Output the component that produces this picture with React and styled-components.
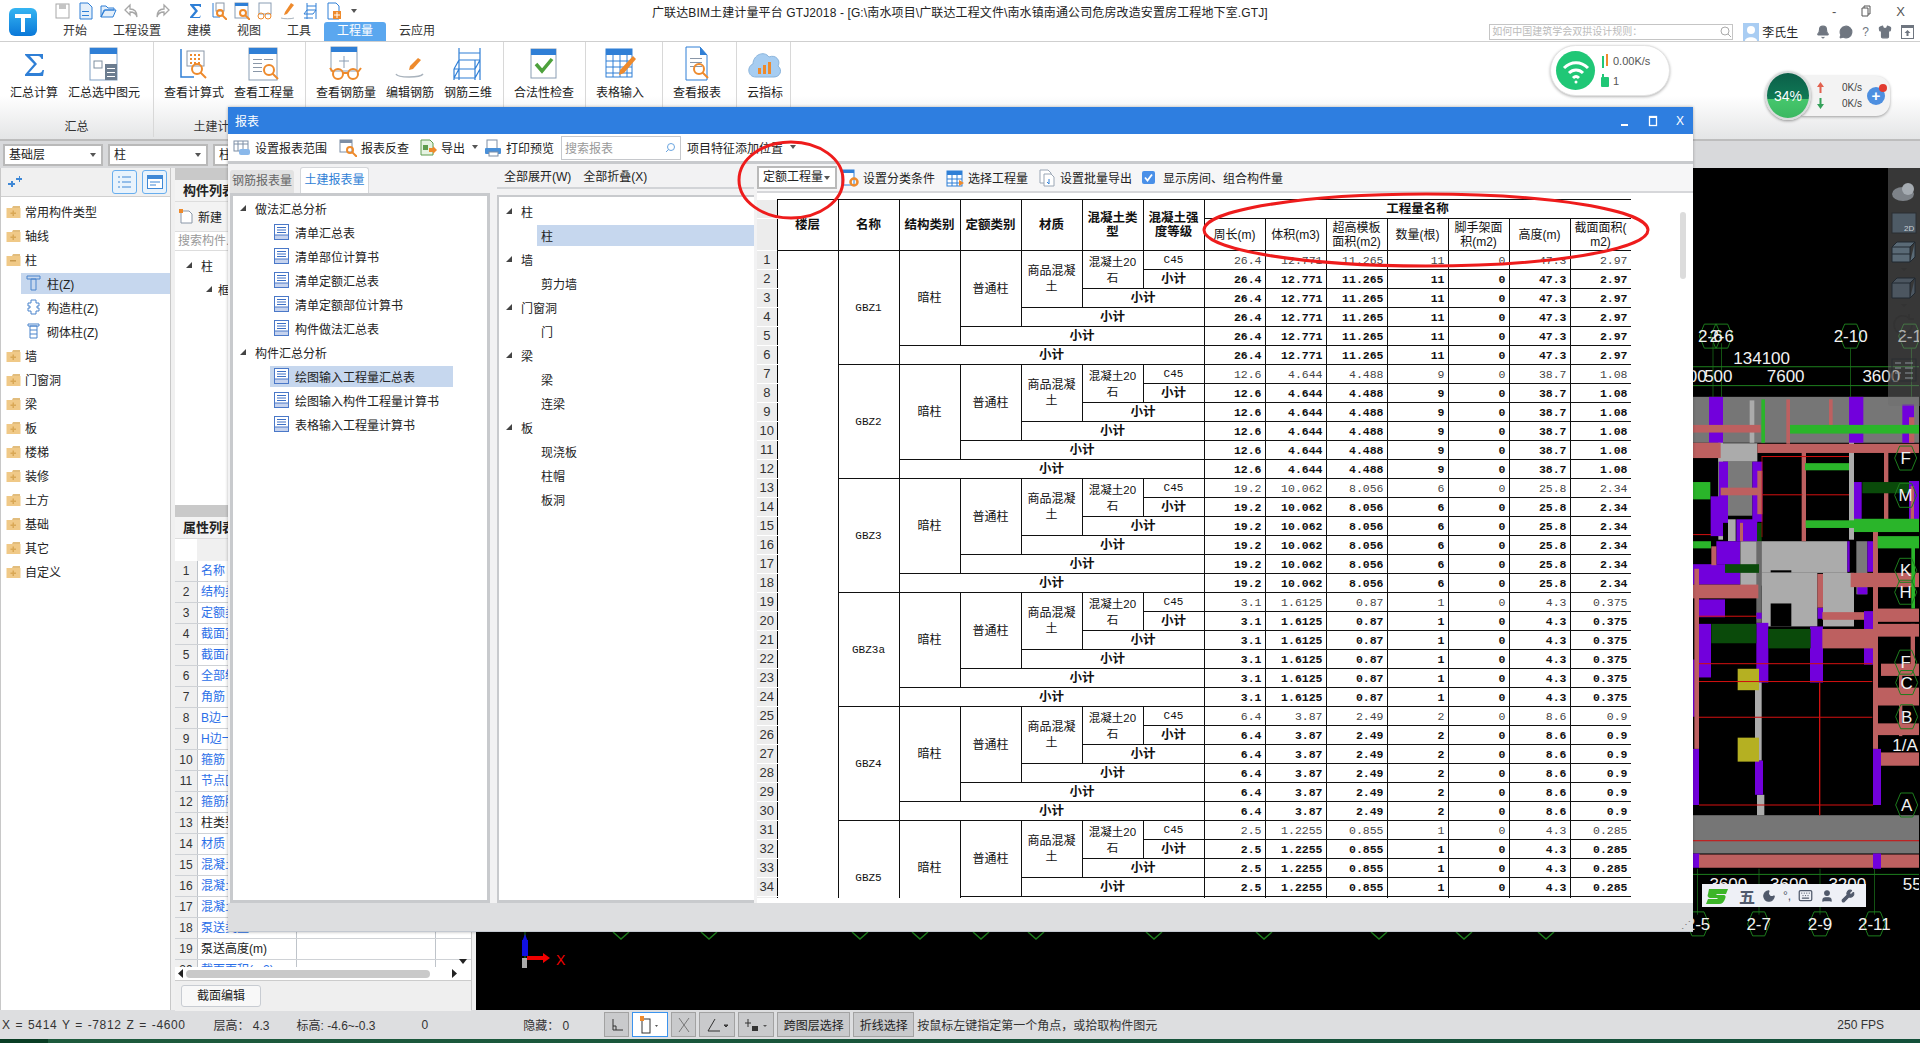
import React from 'react';
import styled, { createGlobalStyle } from 'styled-components';
import { Moon, Keyboard, User, Wrench, Bell, MessageCircle, Shirt } from 'lucide-react';

const SANS = '"Liberation Sans", "Noto Sans CJK SC", sans-serif';

const GlobalStyle = createGlobalStyle`
  html, body { margin: 0; padding: 0; background: #000; }
  * { box-sizing: border-box; }
  body { font-family: ${SANS}; font-size: 12px; color: #222; }
`;

const BLUE = '#2f7fd6';
const ORANGE = '#ee8a2c';

const Page = styled.div`
  position: relative;
  width: 1920px;
  height: 1043px;
  overflow: hidden;
  display: flex;
  flex-direction: column;
  background: #dddee0;
`;

/* ---------- top bar ---------- */
const Header = styled.header`
  height: 42px;
  display: flex;
  background: #fff;
  border-bottom: 1px solid #cfcfcf;
`;
const LogoBox = styled.div`
  width: 46px;
  padding: 8px 0 0 8px;
`;
const HeaderMain = styled.div`
  flex: 1;
  display: flex;
  flex-direction: column;
`;
const QuickRow = styled.div`
  height: 22px;
  display: flex;
  align-items: center;
`;
const QuickIcons = styled.div`
  width: 606px;
  display: flex;
  align-items: center;
  gap: 6px;
  padding-left: 8px;
`;
const QuickSlot = styled.span`
  display: flex;
  margin-right: ${(p) => p.$gap || 0}px;
`;
const TitleText = styled.div`
  white-space: nowrap;
  letter-spacing: 0.12px;
  color: #222;
`;
const WindowButtons = styled.div`
  margin-left: auto;
  display: flex;
  gap: 25px;
  padding-right: 15px;
  color: #555;
  font-size: 13px;
  align-items: center;
`;
const TabRow = styled.nav`
  height: 19px;
  display: flex;
  align-items: center;
  padding-left: 4px;
`;
const Tab = styled.div`
  height: 19px;
  line-height: 19px;
  padding: 0 13px;
  font-size: 12px;
  color: ${(p) => (p.$active ? '#fff' : '#333')};
  background: ${(p) => (p.$active ? '#5aa7ef' : 'transparent')};
  border-radius: ${(p) => (p.$active ? '3px 3px 0 0' : '0')};
`;
const UserArea = styled.div`
  margin-left: auto;
  display: flex;
  align-items: center;
  height: 19px;
  padding-right: 6px;
`;
const HelpSearch = styled.div`
  width: 244px;
  height: 16px;
  border: 1px solid #c5c5c5;
  margin-right: 10px;
  color: #bbb;
  font-size: 10px;
  line-height: 14px;
  padding-left: 2px;
  overflow: hidden;
  white-space: nowrap;
  display: flex;
  justify-content: space-between;
  align-items: center;
`;
const UserName = styled.span`
  font-size: 12px;
  margin: 0 18px 0 3px;
  color: #222;
`;
const UserIcons = styled.div`
  display: flex;
  align-items: center;
  gap: 9px;
  color: #6f7680;
`;

/* ---------- ribbon ---------- */
const Ribbon = styled.div`
  height: 97px;
  display: flex;
  background: linear-gradient(#fff 0%, #fff 55%, #e4e5e6 100%);
`;
const RibbonGroup = styled.section`
  width: ${(p) => p.$w}px;
  height: 95px;
  flex: none;
  display: flex;
  flex-direction: column;
  border-right: 1px solid #d8d8d8;
`;
const RibbonButtons = styled.div`
  flex: 1;
  display: flex;
  gap: 10px;
  padding: 4px 10px 0;
`;
const RibbonButton = styled.div`
  display: flex;
  flex-direction: column;
  align-items: center;
  white-space: nowrap;
  font-size: 12px;
  color: #222;
`;
const RibbonIcon = styled.div`
  height: 36px;
  display: flex;
  align-items: center;
  margin-bottom: 1px;
`;
const GroupLabel = styled.div`
  text-align: center;
  height: 20px;
  line-height: 20px;
  color: #333;
`;
const NetPill = styled.div`
  position: absolute;
  left: 1550px;
  top: 45px;
  width: 120px;
  height: 51px;
  display: flex;
  align-items: center;
  gap: 6px;
  padding-left: 5px;
  background: #fff;
  border: 1px solid #e3e3e3;
  border-radius: 26px;
  box-shadow: 0 1px 3px rgba(0, 0, 0, 0.3);
`;
const WifiDot = styled.div`
  width: 39px;
  height: 39px;
  flex: none;
  display: flex;
  align-items: center;
  justify-content: center;
  border-radius: 50%;
  background: #20c776;
`;
const NetStats = styled.div`
  display: flex;
  flex-direction: column;
  gap: 6px;
  font-size: 11px;
  color: #555;
`;
const NetLine = styled.div`
  display: flex;
  align-items: center;
  gap: 4px;
`;
const SpeedWidget = styled.div`
  position: absolute;
  left: 1765px;
  top: 71px;
  height: 49px;
  display: flex;
  align-items: center;
`;
const SpeedSphere = styled.div`
  position: relative;
  z-index: 1;
  width: 46px;
  height: 49px;
  display: flex;
  align-items: center;
  justify-content: center;
  border-radius: 50%;
  border: 2px solid #d9dcdc;
  background: linear-gradient(#0c5f49 0%, #0f7a55 58%, #46c66c 58%, #3ab861 100%);
  color: #fff;
  font-size: 14px;
  box-shadow: 0 1px 3px rgba(0, 0, 0, 0.4);
`;
const SpeedPill = styled.div`
  position: relative;
  width: 88px;
  height: 40px;
  margin-left: -9px;
  padding: 0 5px 0 15px;
  display: flex;
  align-items: center;
  justify-content: space-between;
  background: #f3f3f3;
  border-radius: 0 14px 14px 0;
  box-shadow: 0 1px 3px rgba(0, 0, 0, 0.35);
  font-size: 10px;
  color: #444;
`;
const SpeedRows = styled.div`
  display: flex;
  flex-direction: column;
  gap: 5px;
`;
const SpeedRow = styled.div`
  display: flex;
  align-items: center;
  gap: 18px;
`;
const PlusBadge = styled.div`
  position: relative;
  width: 18px;
  height: 18px;
  line-height: 17px;
  text-align: center;
  border-radius: 50%;
  background: #4d8fe0;
  color: #fff;
  font-size: 15px;
  font-weight: bold;
  &::after {
    content: '';
    position: absolute;
    right: -2px;
    top: -3px;
    width: 8px;
    height: 8px;
    border-radius: 50%;
    background: #e23b30;
  }
`;

/* ---------- workspace ---------- */
const ComboBar = styled.div`
  height: 29px;
  display: flex;
  align-items: center;
  gap: 5px;
  padding-left: 3px;
  background: #d8d9db;
  border-top: 2px solid #bdbdbd;
`;
const Combo = styled.div`
  position: relative;
  width: ${(p) => p.$w}px;
  height: ${(p) => p.$h || 22}px;
  line-height: ${(p) => (p.$h || 22) - 4}px;
  padding-left: 4px;
  background: #fff;
  border: 2px solid #b9b9b9;
  color: #222;
  font-size: 12px;
  &::after {
    content: '';
    position: absolute;
    right: 5px;
    top: 50%;
    margin-top: -2px;
    border: 3px solid transparent;
    border-top: 4px solid #555;
  }
`;
const Workspace = styled.div`
  flex: 1;
  display: flex;
  min-height: 0;
  background: #f0f0f0;
`;
const TreePanel = styled.aside`
  width: 171px;
  display: flex;
  flex-direction: column;
  background: #fff;
  border-right: 1px solid #c8c8c8;
  border-left: 1px solid #c8c8c8;
`;
const TreeHead = styled.div`
  height: 29px;
  flex: none;
  display: flex;
  align-items: center;
  padding: 0 3px 0 7px;
  gap: 5px;
  background: #f0f0f0;
  border-bottom: 1px solid #d0d0d0;
`;
const ModeButton = styled.div`
  width: 25px;
  height: 24px;
  display: flex;
  align-items: center;
  justify-content: center;
  background: #e9f3fc;
  border: 1px solid #68aeee;
  border-radius: 3px;
  margin-left: ${(p) => (p.$first ? 'auto' : '0')};
`;
const Tree = styled.div`
  padding-top: ${(p) => p.$top || 0}px;
`;
const TreeRow = styled.div`
  height: 24px;
  display: flex;
  align-items: center;
  padding-left: ${(p) => p.$indent}px;
  color: #222;
  font-size: 12px;
  white-space: nowrap;
`;
const RowLabel = styled.div`
  height: 21px;
  display: flex;
  align-items: center;
  gap: ${(p) => p.$gap || 6}px;
  padding-left: ${(p) => p.$pad || 0}px;
  width: ${(p) => (p.$w ? `${p.$w}px` : 'auto')};
  flex: ${(p) => (p.$w ? 'none' : '1')};
  background: ${(p) => (p.$active ? '#c6d7ee' : 'transparent')};
`;
const Caret = styled.i`
  display: block;
  width: 6px;
  height: 6px;
  margin-right: ${(p) => p.$gap || 9}px;
  background: #444;
  clip-path: polygon(100% 0, 100% 100%, 0 100%);
`;
const MidColumn = styled.div`
  position: relative;
  width: 297px;
  margin-left: 4px;
  display: flex;
  flex-direction: column;
  background: #fff;
  border-right: 1px solid #c8c8c8;
`;
const GreyStrip = styled.div`
  height: 12px;
  flex: none;
  background: #c9c9c9;
`;
const PaneTitle = styled.div`
  height: 22px;
  flex: none;
  line-height: 22px;
  padding-left: 8px;
  font-weight: bold;
  font-size: 13px;
  background: #f3f3f3;
  border-bottom: 1px solid #ddd;
`;
const NewRow = styled.div`
  height: 30px;
  flex: none;
  display: flex;
  align-items: center;
  gap: 5px;
  padding-left: 4px;
  background: #f3f3f3;
  border-bottom: 1px solid #ddd;
`;
const SearchRow = styled.div`
  height: 19px;
  flex: none;
  line-height: 19px;
  padding-left: 3px;
  color: #999;
  border-bottom: 1px solid #ddd;
`;
const ListArea = styled.div`
  height: 254px;
  flex: none;
`;
const PropHead = styled.div`
  height: 22px;
  flex: none;
  margin-left: 22px;
  background: #f0f0f0;
  text-align: center;
  line-height: 22px;
  width: 241px;
`;
const PropList = styled.div`
  height: 406px;
  flex: none;
  overflow: hidden;
`;
const PropRow = styled.div`
  display: grid;
  grid-template-columns: 22px 100px 139px;
  height: 21px;
  line-height: 20px;
  border-bottom: 1px solid #cfd2d6;
`;
const PropNum = styled.div`
  background: #efefef;
  text-align: center;
  font-size: 12px;
  color: #333;
`;
const PropName = styled.div`
  padding-left: 3px;
  white-space: nowrap;
  overflow: hidden;
  font-size: 12px;
  color: ${(p) => (p.$plain ? '#222' : '#2b6fe8')};
  border-right: 1px solid #bfc4ca;
  border-left: 1px solid #bfc4ca;
`;
const PropValue = styled.div`
  border-right: 1px solid #bfc4ca;
`;
const ScrollDown = styled.i`
  position: absolute;
  right: 4px;
  bottom: 46px;
  border: 4px solid transparent;
  border-top: 5px solid #222;
  border-bottom: none;
`;
const HScroll = styled.div`
  height: 14px;
  flex: none;
  display: flex;
  align-items: center;
  gap: 3px;
  padding: 0 14px 0 3px;
  border-bottom: 1px solid #ccc;
`;
const HArrow = styled.i`
  display: block;
  width: 5px;
  height: 9px;
  background: #222;
  clip-path: ${(p) => (p.$right ? 'polygon(0 0, 100% 50%, 0 100%)' : 'polygon(100% 0, 100% 100%, 0 50%)')};
  margin-left: ${(p) => (p.$right ? '19px' : '0')};
`;
const HThumb = styled.div`
  flex: 1;
  height: 8px;
  border-radius: 4px;
  background: #c9c9c9;
`;
const PaneFoot = styled.div`
  flex: 1;
  padding: 4px 6px;
  background: #efefef;
`;
const FootButton = styled.div`
  width: 80px;
  height: 22px;
  line-height: 20px;
  text-align: center;
  background: #f8f8f8;
  border: 1px solid #c8ccd2;
  border-radius: 3px;
  font-size: 12px;
`;

/* ---------- CAD canvas ---------- */
const Canvas = styled.main`
  position: relative;
  flex: 1;
  margin-left: 4px;
  background: #000;
  overflow: hidden;
`;
const CadLayer = styled.svg`
  position: absolute;
  left: 0;
  top: 0;
`;
const ViewTools = styled.div`
  position: absolute;
  right: 0;
  top: 0;
  width: 32px;
  height: 238px;
  background: rgba(110, 110, 110, 0.5);
  border-radius: 0 0 0 3px;
  display: flex;
  flex-direction: column;
  align-items: center;
  padding-top: 14px;
`;
const ViewSlot = styled.div`
  display: flex;
  margin-top: ${(p) => p.$gap || 0}px;
`;
const ViewDrop = styled.i`
  display: block;
  margin-top: 5px;
  border: 3px solid transparent;
  border-top: 3px solid #333;
  border-bottom: none;
`;
const ImeBar = styled.div`
  position: absolute;
  left: 1226px;
  top: 716px;
  width: 164px;
  height: 23px;
  display: flex;
  align-items: center;
  gap: 7px;
  padding-left: 2px;
  background: #eef0f6;
  color: #50596b;
`;
const ImeChar = styled.span`
  font-size: 16px;
  font-weight: bold;
  margin-left: 2px;
`;

/* ---------- status bar ---------- */
const StatusBar = styled.footer`
  height: 29px;
  display: flex;
  align-items: center;
  background: #dddee0;
  font-size: 12px;
  color: #333;
  white-space: nowrap;
`;
const StatusText = styled.span`
  margin-left: ${(p) => p.$left || 0}px;
  word-spacing: ${(p) => p.$spread || 0}px;
  letter-spacing: ${(p) => p.$track || 0}px;
`;
const FpsText = styled.span`
  margin-left: auto;
  padding-right: 36px;
`;
const StatusButton = styled.div`
  width: ${(p) => p.$w}px;
  height: 25px;
  flex: none;
  margin-right: 3px;
  display: flex;
  align-items: center;
  justify-content: center;
  background: ${(p) => (p.$on ? '#fff' : '#c9cacc')};
  border: 1px solid ${(p) => (p.$on ? '#3b93ee' : '#a2a2a2')};
  color: #222;
  font-size: 12px;
`;
const BottomStrip = styled.div`
  height: 4px;
  background: linear-gradient(90deg, #093d24 0, #093d24 48px, #1d5a3c 48px, #13503a 100%);
`;

/* ---------- report dialog ---------- */
const Dialog = styled.div`
  position: absolute;
  left: 228px;
  top: 107px;
  width: 1465px;
  height: 825px;
  display: flex;
  flex-direction: column;
  background: #f2f2f3;
  box-shadow: 0 0 3px rgba(0, 0, 0, 0.3);
`;
const DialogTitle = styled.div`
  height: 27px;
  flex: none;
  display: flex;
  align-items: center;
  padding: 0 9px 0 7px;
  background: #2e7ee0;
  color: #fff;
  font-size: 12px;
`;
const DialogButtons = styled.div`
  margin-left: auto;
  display: flex;
  align-items: center;
  gap: 17px;
  font-size: 12px;
`;
const DialogToolbar = styled.div`
  height: 30px;
  flex: none;
  display: flex;
  align-items: center;
  padding-left: 1px;
  background: #fff;
  border-bottom: 3px solid #c8cacd;
`;
const ToolButton = styled.div`
  height: 26px;
  display: flex;
  align-items: center;
  gap: ${(p) => p.$inner || 4}px;
  padding: 0 ${(p) => p.$pad || 4}px;
  margin-right: ${(p) => p.$gap || 0}px;
  font-size: 12px;
  color: #222;
  white-space: nowrap;
`;
const TinyArrow = styled.i`
  display: block;
  margin: 2px 0 0 3px;
  border: 3px solid transparent;
  border-top: 4px solid #555;
`;
const SearchBox = styled.div`
  width: 120px;
  height: 24px;
  margin: 0 2px 0 5px;
  display: flex;
  align-items: center;
  justify-content: space-between;
  padding: 0 3px;
  border: 1px solid #c6c8cc;
  color: #999;
  font-size: 12px;
`;
const DialogBody = styled.div`
  height: 739px;
  flex: none;
  display: flex;
  padding-left: 2px;
`;
const FirstColumn = styled.div`
  width: 260px;
  display: flex;
  flex-direction: column;
  flex: none;
`;
const TabStrip = styled.div`
  height: 29px;
  flex: none;
  display: flex;
  align-items: flex-end;
  gap: 6px;
`;
const ReportTab = styled.div`
  width: ${(p) => (p.$active ? 69 : 64)}px;
  height: ${(p) => (p.$active ? 26 : 23)}px;
  line-height: ${(p) => (p.$active ? 24 : 23)}px;
  text-align: center;
  font-size: 12px;
  color: ${(p) => (p.$active ? BLUE : '#666')};
  background: ${(p) => (p.$active ? '#fff' : '#e2e2e2')};
  border: ${(p) => (p.$active ? '1px solid #d5d7da' : 'none')};
  border-bottom: none;
  border-radius: 3px 3px 0 0;
`;
const ReportPane = styled.div`
  flex: 1;
  background: #fff;
  border: 3px solid #c8cacd;
`;
const SecondColumn = styled.div`
  width: 257px;
  margin-left: 7px;
  display: flex;
  flex-direction: column;
  flex: none;
`;
const ExpandBar = styled.div`
  height: 25px;
  flex: none;
  display: flex;
  align-items: center;
  padding-left: 1px;
  border-bottom: 2px solid #d2d4d7;
`;
const MidTreePane = styled.div`
  margin-top: 6px;
  flex: 1;
  background: #fff;
  border-top: 2px solid #c8cacd;
  border-left: 2px solid #c8cacd;
  border-bottom: 3px solid #c8cacd;
`;
const ThirdColumn = styled.div`
  flex: 1;
  margin-left: 3px;
  display: flex;
  flex-direction: column;
  background: #fff;
  min-width: 0;
`;
const ResultToolbar = styled.div`
  height: 29px;
  flex: none;
  display: flex;
  align-items: center;
  background: #f6f6f7;
  border-bottom: 2px solid #d6d7da;
`;
const CheckBox = styled.span`
  width: 13px;
  height: 13px;
  display: flex;
  align-items: center;
  justify-content: center;
  border-radius: 2px;
  background: #4a90e8;
`;
const SheetWrap = styled.div`
  flex: 1;
  min-height: 0;
  display: flex;
  padding-top: 6px;
  background: #fff;
`;
const Sheet = styled.div`
  width: 874px;
  height: 699px;
  flex: none;
  overflow: hidden;
`;
const ReportTable = styled.table`
  border-collapse: collapse;
  table-layout: fixed;
  width: 874px;
  font-family: "Liberation Mono", "Noto Sans CJK SC", monospace;
  color: #111;
  col.num { width: 20px; }
  col.data { width: 61px; }
`;
const NumCell = styled.th`
  padding: 0;
  background: #ececec;
  border-right: 1px solid #000;
  border-bottom: 1px solid #fff;
  font-family: ${SANS};
  font-weight: normal;
  font-size: 13px;
  color: #333;
  line-height: 18px;
`;
const HeadCell = styled.th`
  padding: 0 1px;
  border: 1px solid #111;
  border-left: ${(p) => (p.$open ? 'none' : '1px solid #111')};
  font-family: ${SANS};
  font-size: ${(p) => (p.$sub ? 12 : 12.5)}px;
  font-weight: ${(p) => (p.$sub ? 'normal' : 'bold')};
  line-height: 14px;
  text-align: center;
  word-break: break-all;
  line-break: anywhere;
  height: ${(p) => p.$h}px;
`;
const BlankCell = styled.td`
  border-right: 1px solid #111;
`;
const LabelCell = styled.td`
  padding: 0 1px;
  border: 1px solid #111;
  text-align: center;
  font-family: ${SANS};
  font-size: ${(p) => p.$size || 12}px;
  font-weight: ${(p) => (p.$bold ? 'bold' : 'normal')};
  line-height: 16px;
  height: 19px;
`;
const MonoCell = styled(LabelCell)`
  font-family: "Liberation Mono", monospace;
`;
const ValueCell = styled.td`
  padding: 0 3px 0 0;
  height: 19px;
  border: 1px solid #111;
  text-align: right;
  font-size: 11.5px;
  line-height: 17px;
  font-weight: ${(p) => (p.$bold ? 'bold' : 'normal')};
  color: ${(p) => (p.$bold ? '#111' : '#444')};
`;
const ScrollTrack = styled.div`
  width: 6px;
  margin-left: 49px;
  padding-top: 13px;
`;
const ScrollThumb = styled.div`
  height: 67px;
  border-radius: 3px;
  background: #dcdcdc;
`;
const DialogFooter = styled.div`
  flex: 1;
  position: relative;
  background: #dddee0;
  border-bottom: 1px solid #c3c8d0;
`;
const ResizeGrip = styled.span`
  position: absolute;
  right: 2px;
  bottom: 1px;
  color: #777;
  font-size: 10px;
`;
const RedRing = styled.svg`
  position: absolute;
  left: 0;
  top: 0;
  pointer-events: none;
`;

/* ---------- icons ---------- */
const Mag = ({ x, y, r = 5 }) => (
  <g fill="none" stroke={ORANGE} strokeWidth="2">
    <circle cx={x} cy={y} r={r} />
    <line x1={x + r * 0.7} y1={y + r * 0.7} x2={x + r + 4} y2={y + r + 4} />
  </g>
);
const Lines = ({ x, y, w, n = 3, gap = 4, c = '#8a97a8' }) => (
  <g stroke={c} strokeWidth="1">
    {Array.from({ length: n }, (_, i) => (
      <line key={i} x1={x} x2={x + w} y1={y + i * gap + 0.5} y2={y + i * gap + 0.5} />
    ))}
  </g>
);
const Page34 = ({ children }) => (
  <svg width="36" height="36" viewBox="0 0 36 36">{children}</svg>
);

const IconSigma = () => (
  <Page34>
    <path d="M9 8h18v5h-1.500c-.5-1.500-1.500-3-3.500-3H14l7 8-8 9h10c2 0 3-1 3.500-3H28l-1 6H9v-1.500l9-10.500-9-9z" fill={BLUE} />
  </Page34>
);
const IconSumSelected = () => (
  <Page34>
    <rect x="4" y="2" width="27" height="32" fill="#fff" stroke="#7f9fc4" />
    <rect x="4" y="2" width="27" height="6" fill={BLUE} />
    <rect x="8" y="15" width="8" height="7" fill="none" stroke="#7f8fa0" />
    <rect x="19" y="18" width="12" height="16" fill="#6c7d90" />
    <Lines x={21} y={22} w={8} c="#fff" />
  </Page34>
);
const IconFormula = () => (
  <Page34>
    <path d="M5 3v28h13" fill="none" stroke={BLUE} strokeWidth="1.500" />
    <rect x="11" y="5" width="17" height="15" fill="#fff" stroke="#8a97a8" />
    <g fill={ORANGE}>
      {[14, 18, 22].map((x) => [8, 12, 16].map((y) => <rect key={`${x}${y}`} x={x} y={y} width="2" height="2" />))}
    </g>
    <Mag x={21} y={23} />
  </Page34>
);
const IconQuantity = () => (
  <Page34>
    <rect x="3" y="2" width="28" height="32" fill="#fff" stroke="#8a9db3" />
    <rect x="3" y="2" width="28" height="6" fill={BLUE} />
    <Lines x={7} y={13} w={9} n={4} />
    <Lines x={18} y={13} w={9} n={1} />
    <Mag x={23} y={24} r={5} />
  </Page34>
);
const IconGlasses = () => (
  <Page34>
    <rect x="3" y="1" width="26" height="24" fill="#fff" stroke="#8a9db3" />
    <rect x="3" y="1" width="26" height="5" fill={BLUE} />
    <path d="M16 10v12M11 15h10" stroke="#8a9db3" fill="none" />
    <g fill="none" stroke={ORANGE} strokeWidth="2">
      <circle cx="10" cy="28" r="5" />
      <circle cx="25" cy="28" r="5" />
      <path d="M15 27h5M5 26L2 22M30 26l3-4" />
    </g>
  </Page34>
);
const IconPencilRebar = () => (
  <Page34>
    <path d="M4 28c2 4 24 4 27 0" fill="none" stroke="#a9b3bd" strokeWidth="1.500" />
    <path d="M26 12l3 2-8 9-4 1 1-4z" fill={ORANGE} />
  </Page34>
);
const IconRebar3d = () => (
  <Page34>
    <g fill="none" stroke={BLUE} strokeWidth="1.200">
      <path d="M9 2v32M30 2v32M9 7h21M9 14h21M4 23h21M4 32h21M4 23l5-9M25 23l5-9M4 32l5-9M25 32l5-9M4 23v11M25 14v20" />
    </g>
  </Page34>
);
const IconCheck = () => (
  <Page34>
    <rect x="5" y="3" width="25" height="29" fill="#fff" stroke="#8a9db3" />
    <rect x="5" y="3" width="25" height="6" fill={BLUE} />
    <path d="M10 18l6 7 10-12" fill="none" stroke="#4da13c" strokeWidth="3.500" />
  </Page34>
);
const IconTable = () => (
  <Page34>
    <rect x="4" y="3" width="26" height="28" fill="#fff" stroke={BLUE} />
    <rect x="4" y="3" width="26" height="6" fill={BLUE} />
    <path d="M4 15h26M4 21h26M4 27h26M11 9v22M18 9v22M25 9v22" stroke={BLUE} fill="none" />
    <path d="M31 10l3 3-12 14-5 2 1-5z" fill={ORANGE} />
  </Page34>
);
const IconReport = () => (
  <Page34>
    <path d="M7 1h14l7 8v25H7z" fill="#fff" stroke={BLUE} />
    <path d="M21 1v8h7z" fill={BLUE} />
    <Lines x={11} y={12} w={12} n={3} />
    <Mag x={20} y={23} />
  </Page34>
);
const IconCloud = () => (
  <Page34>
    <path d="M9 31c-9 0-9-11-3-13 0-9 11-14 16-7 7-3 12 4 9 9 5 4 2 11-4 11z" fill="#a7cdf1" stroke="#8ab4dc" />
    <g fill={ORANGE}>
      <rect x="11" y="22" width="3" height="6" />
      <rect x="16" y="19" width="3" height="9" />
      <rect x="21" y="16" width="3" height="12" />
    </g>
  </Page34>
);

const QuickSvg = ({ children }) => (
  <svg width="17" height="18" viewBox="0 0 17 18">{children}</svg>
);
const QuickIconsSet = [
  <><rect x="2" y="2" width="13" height="14" fill="none" stroke="#a7a7a7" /><rect x="5" y="2" width="7" height="5" fill="#c4c4c4" /></>,
  <><path d="M3 1h8l4 4v12H3z" fill="#e4effa" stroke={BLUE} /><Lines x={5} y={9} w={7} c={BLUE} n={2} /></>,
  <path d="M1 15V4h5l2 2h6v2H5L1 15l3-7h12l-3 7z" fill="#e4effa" stroke={BLUE} />,
  <path d="M7 3L2 8l5 5V10c4 0 6 1 7 5 0-6-3-8-7-8z" fill="none" stroke="#a7a7a7" strokeWidth="1.300" />,
  <path d="M10 3l5 5-5 5V10c-4 0-6 1-7 5 0-6 3-8 7-8z" fill="none" stroke="#a7a7a7" strokeWidth="1.300" />,
  <path d="M3 2h11v3h-1c0-1-1-1-2-1H7l4 5-5 6h6c1 0 1-1 2-2l-1 3H3v-1l5-6-5-6z" fill={BLUE} />,
  <><path d="M3 1v14h7" fill="none" stroke={BLUE} /><rect x="6" y="1" width="8" height="8" fill="#fff" stroke="#8a97a8" /><Mag x={10} y={11} r={3} /></>,
  <><rect x="2" y="1" width="13" height="15" fill="#fff" stroke="#8a9db3" /><rect x="2" y="1" width="13" height="3" fill={BLUE} /><Mag x={10} y={11} r={3} /></>,
  <><rect x="3" y="1" width="12" height="11" fill="#fff" stroke="#8a9db3" /><circle cx="5" cy="14" r="3" fill="none" stroke={ORANGE} /><circle cx="12" cy="14" r="3" fill="none" stroke={ORANGE} /></>,
  <><path d="M2 16c3 1 10 1 13 0" stroke="#a9b3bd" fill="none" /><path d="M12 1l3 2-7 9-3 1 1-3z" fill={ORANGE} /></>,
  <path d="M5 1v16M14 1v16M5 4h9M5 8h9M2 12h9M2 16h9M2 12l3-4M11 12l3-4" stroke={BLUE} fill="none" />,
  <><path d="M3 1h8l3 3v13H3z" fill="#fff" stroke={BLUE} /><rect x="8" y="9" width="8" height="8" fill={ORANGE} /><path d="M12 10v6M9 13h6" stroke="#fff" /></>,
];
const QUICK_GAPS = { 3: 8, 4: 10 };

const ToolIcon = ({ children }) => (
  <svg width="18" height="18" viewBox="0 0 18 18">{children}</svg>
);
const DocLines = () => (
  <svg width="15" height="16" viewBox="0 0 15 16">
    <rect x="0.500" y="0.500" width="14" height="15" fill="#fff" stroke="#4a78c8" />
    <rect x="0.500" y="11" width="14" height="4.500" fill="#c6d3ee" stroke="#4a78c8" />
    <Lines x={3} y={3} w={9} n={3} gap={2.500} c="#3c6fc4" />
  </svg>
);
const FolderIcon = ({ open }) => (
  <svg width="15" height="13" viewBox="0 0 15 13">
    <path d="M1 3h5l1-2h7v2H1z" fill="#e2bd7d" />
    <rect x="0.500" y="3" width="14" height="10" fill="#f0c987" />
    {open ? (
      <rect x="4" y="7" width="6" height="1.500" fill="#c89a4e" />
    ) : (
      <path d="M6.500 5.500h1.500v2h2v1.500h-2v2H6.500V9h-2V7.500h2z" fill="#d9a856" />
    )}
  </svg>
);
const ColumnIcon = ({ kind }) => (
  <svg width="15" height="16" viewBox="0 0 15 16" fill="none" stroke="#4a84cc">
    {kind === 'z' && <path d="M1 1h13v3H1zM5 4h5v11H5z" />}
    {kind === 'g' && <path d="M5 1h5v3h3v3h-2v2h2v3h-3v3H5v-3H2V9h2V7H2V4h3z" />}
    {kind === 'q' && <><path d="M2 1h11v2H2zM4 3h7v12H4z" /><path d="M4 7h7M4 11h7" /></>}
  </svg>
);

const TOOL_ICONS = {
  scope: <><rect x="1" y="2" width="14" height="10" fill="#fff" stroke="#7d8ea5" /><path d="M1 5h14M5 2v10M10 2v10" stroke="#7d8ea5" /><rect x="6" y="10" width="11" height="6" rx="2" fill="#8ab8ea" /></>,
  reverse: <><rect x="1" y="1" width="12" height="12" fill="#fff" stroke="#7d8ea5" /><rect x="1" y="1" width="12" height="3" fill="#7d8ea5" /><Mag x={11} y={11} r={3} /></>,
  export: <><path d="M2 1h9l3 3v12H2z" fill="#e6f3e2" stroke="#5e9c4e" /><rect x="4" y="6" width="5" height="5" fill="#5e9c4e" /><path d="M10 9h4V7l4 4-4 4v-2h-4z" fill={ORANGE} /></>,
  print: <><rect x="3" y="1" width="10" height="9" fill="#fff" stroke="#7d8ea5" /><rect x="1" y="9" width="16" height="6" rx="1" fill="#4a90d8" /><rect x="5" y="13" width="9" height="4" fill="#fff" stroke="#7d8ea5" /></>,
  category: <><rect x="1" y="1" width="12" height="15" fill="#fff" stroke={BLUE} /><rect x="1" y="1" width="12" height="3" fill={BLUE} /><circle cx="13" cy="13" r="3.500" fill="none" stroke={ORANGE} strokeWidth="2.500" /></>,
  pick: <><rect x="1" y="2" width="15" height="15" fill="#fff" stroke={BLUE} /><rect x="1" y="2" width="15" height="4" fill={BLUE} /><path d="M1 10h15M1 14h15M6 6v11M11 6v11" stroke={BLUE} /><path d="M13 11l5 3-5 3z" fill={ORANGE} /></>,
  batch: <><path d="M2 1h8l3 3v10H2z" fill="#fff" stroke="#9aa6b5" /><path d="M6 5h7l3 3v9H6z" fill="#fff" stroke="#9aa6b5" /><path d="M11 10v5l-2-2" stroke={BLUE} fill="none" /></>,
};

/* ---------- data ---------- */
const RIBBON = [
  { w: 154, label: '汇总', items: [['汇总计算', <IconSigma />], ['汇总选中图元', <IconSumSelected />]] },
  { w: 152, label: '土建计算结果', items: [['查看计算式', <IconFormula />], ['查看工程量', <IconQuantity />]] },
  { w: 198, label: '钢筋计算结果', items: [['查看钢筋量', <IconGlasses />], ['编辑钢筋', <IconPencilRebar />], ['钢筋三维', <IconRebar3d />]] },
  { w: 82, label: '检查', items: [['合法性检查', <IconCheck />]] },
  { w: 77, label: '表格输入', items: [['表格输入', <IconTable />]] },
  { w: 74, label: '报表', items: [['查看报表', <IconReport />]] },
  { w: 54, label: '指标', items: [['云指标', <IconCloud />]] },
];
const TABS = ['开始', '工程设置', '建模', '视图', '工具', '工程量', '云应用'];
const LEFT_TREE = [
  ['常用构件类型'], ['轴线'], ['柱', 'open'], ['柱(Z)', 'z', true], ['构造柱(Z)', 'g'], ['砌体柱(Z)', 'q'],
  ['墙'], ['门窗洞'], ['梁'], ['板'], ['楼梯'], ['装修'], ['土方'], ['基础'], ['其它'], ['自定义'],
];
const PROPS = ['名称', '结构类别', '定额类别', '截面宽度(B边)(mm)', '截面高度(H边)(mm)', '全部纵筋', '角筋',
  'B边一侧中部筋', 'H边一侧中部筋', '箍筋', '节点区箍筋', '箍筋肢数', '柱类型', '材质', '混凝土类型',
  '混凝土强度等级', '混凝土外加剂', '泵送类型', '泵送高度(m)', '截面面积(m2)'];
const BLACK_PROPS = [12, 18];
const REPORT_TREE = [
  { title: '做法汇总分析', items: ['清单汇总表', '清单部位计算书', '清单定额汇总表', '清单定额部位计算书', '构件做法汇总表'] },
  { title: '构件汇总分析', items: ['绘图输入工程量汇总表', '绘图输入构件工程量计算书', '表格输入工程量计算书'] },
];
const MID_TREE = [
  ['柱', ['柱']], ['墙', ['剪力墙']], ['门窗洞', ['门']], ['梁', ['梁', '连梁']], ['板', ['现浇板', '柱帽', '板洞']],
];
const BLOCKS = [
  ['GBZ1', ['26.4', '12.771', '11.265', '11', '0', '47.3', '2.97']],
  ['GBZ2', ['12.6', '4.644', '4.488', '9', '0', '38.7', '1.08']],
  ['GBZ3', ['19.2', '10.062', '8.056', '6', '0', '25.8', '2.34']],
  ['GBZ3a', ['3.1', '1.6125', '0.87', '1', '0', '4.3', '0.375']],
  ['GBZ4', ['6.4', '3.87', '2.49', '2', '0', '8.6', '0.9']],
  ['GBZ5', ['2.5', '1.2255', '0.855', '1', '0', '4.3', '0.285']],
];
const SUB_HEADS = ['周长(m)', '体积(m3)', '超高模板面积(m2)', '数量(根)', '脚手架面积(m2)', '高度(m)', '截面面积(m2)'];

/* cad shapes in zoom coordinates: x0, y0, x1, y1 */
const CAD_RECTS = [
  ['#767676', [[38, 425, 720, 515], [38, 1245, 720, 1320]]],
  ['#7a7a7a', [[147, 552, 220, 658], [532, 708, 565, 812]]],
  ['#ababab', [[118, 452, 132, 705], [212, 432, 226, 515], [118, 516, 235, 552], [510, 452, 525, 705], [147, 665, 170, 708],
    [184, 708, 248, 795], [248, 708, 505, 770], [248, 770, 415, 875], [432, 770, 525, 875], [228, 978, 248, 1138], [234, 1205, 256, 1245]]],
  ['#000', [[275, 830, 337, 875], [132, 660, 235, 664], [275, 765, 337, 769]]],
  ['#6a6a6a', [[232, 708, 248, 868]]],
  ['#7200dc', [[90, 425, 132, 515], [510, 425, 553, 515], [670, 440, 705, 515], [120, 552, 147, 672], [220, 552, 250, 670],
    [95, 620, 132, 698], [525, 592, 548, 665], [172, 665, 235, 708], [112, 708, 183, 753], [40, 753, 183, 793], [60, 822, 138, 857],
    [60, 870, 96, 975], [38, 940, 60, 1052], [232, 848, 248, 860], [232, 868, 268, 985], [393, 875, 432, 985], [416, 838, 432, 860],
    [505, 708, 512, 768], [565, 708, 597, 768], [535, 798, 565, 812], [555, 845, 585, 950], [582, 812, 597, 852], [38, 1115, 60, 1225],
    [582, 1115, 606, 1225], [228, 1138, 252, 1205], [38, 1320, 62, 1348], [582, 1320, 606, 1350], [690, 590, 720, 680]]],
  ['#bd6060', [[38, 480, 245, 495], [38, 515, 125, 545], [235, 517, 720, 535], [322, 430, 333, 517], [450, 430, 461, 483], [368, 530, 381, 708],
    [615, 530, 628, 665], [125, 603, 245, 618], [235, 570, 250, 655], [183, 672, 192, 708], [97, 718, 112, 755], [38, 793, 238, 820],
    [46, 762, 60, 1115], [415, 772, 432, 838], [430, 847, 555, 862], [430, 880, 585, 918], [515, 770, 720, 798], [582, 668, 597, 1115],
    [595, 840, 720, 866], [595, 870, 720, 895], [606, 948, 720, 972], [595, 995, 720, 1030], [660, 950, 670, 1090], [595, 1065, 720, 1088],
    [606, 1122, 720, 1148], [60, 1322, 582, 1348], [606, 1322, 720, 1348], [690, 465, 706, 515], [695, 600, 705, 665], [695, 870, 708, 950]]],
  ['#2ab52a', [[247, 430, 258, 515], [333, 480, 720, 497], [378, 555, 510, 569], [380, 667, 525, 682], [525, 664, 720, 690], [596, 698, 720, 722],
    [38, 592, 94, 626], [38, 708, 96, 722], [697, 720, 708, 840]]],
  ['#0a4a0a', [[550, 592, 690, 614], [97, 870, 232, 908], [267, 880, 395, 918], [138, 753, 240, 770], [234, 672, 248, 708]]],
  ['#b5b022', [[176, 958, 240, 1000], [176, 1093, 240, 1140]]],
  ['#d01010', [[248, 541, 510, 543], [250, 616, 370, 618], [382, 616, 510, 618], [38, 694, 96, 696], [60, 854, 232, 856], [60, 947, 580, 949],
    [60, 982, 580, 984], [60, 1052, 580, 1054], [60, 1224, 582, 1226], [38, 1294, 720, 1296], [248, 541, 250, 700], [420, 985, 424, 1245]]],
  ['#1d7d1d', [[38, 365, 720, 367], [38, 402, 720, 404], [101, 320, 103, 425], [126, 320, 128, 425], [514, 330, 516, 425], [697, 330, 699, 425],
    [38, 1360, 720, 1362], [55, 1350, 57, 1440], [239, 1350, 241, 1440], [422, 1350, 424, 1440], [586, 1350, 588, 1440]]],
];
const CAD_LABELS = [
  ['2-6', 94, 306, true], ['2-6', 128, 306, true], ['2-10', 515, 306, true], ['2-1', 692, 306, true],
  ['134100', 248, 348], ['00', 55, 385], ['500', 118, 385], ['7600', 320, 385], ['3600', 607, 385],
  ['F', 680, 545, true], ['M', 680, 618, true], ['K', 680, 765, true], ['H', 680, 808, true], ['F', 680, 945, true],
  ['C', 683, 985, true], ['B', 683, 1052, true], ['1/A', 678, 1107], ['A', 683, 1225, true],
  ['3600', 148, 1380], ['3600', 330, 1380], ['3200', 505, 1380], ['55', 700, 1380],
  ['2-5', 57, 1458, true], ['2-7', 239, 1458, true], ['2-9', 423, 1458, true], ['2-11', 586, 1458, true],
];
const AXIS_MARKS = [622, 710, 861, 921, 982, 1037, 1155, 1265, 1380, 1465, 1547];

const CAD_ORIGIN_X = 1680 - 477;
const CAD_ORIGIN_Y = 180 - 168;
const toX = (x) => CAD_ORIGIN_X + x / 3;
const toY = (y) => CAD_ORIGIN_Y + y / 1.96;

function CadDrawing() {
  return (
    <CadLayer width="1443" height="842" viewBox="0 0 1443 842">
      {CAD_RECTS.map(([fill, rects]) =>
        rects.map(([x0, y0, x1, y1]) => (
          <rect key={`${fill}${x0}${y0}`} x={toX(x0)} y={toY(y0)} width={(x1 - x0) / 3} height={(y1 - y0) / 1.96} fill={fill} />
        ))
      )}
      {CAD_LABELS.map(([text, x, y, hex], i) => {
        const cx = toX(x);
        const cy = toY(y);
        return (
          <g key={i}>
            {hex && (
              <polygon
                points={`${cx - 11},${cy} ${cx - 6},${cy - 12} ${cx + 6},${cy - 12} ${cx + 11},${cy} ${cx + 6},${cy + 12} ${cx - 6},${cy + 12}`}
                fill="none"
                stroke="#1d7d1d"
              />
            )}
            <text x={cx} y={cy + 6} textAnchor="middle" fill="#f2f2f2" fontFamily="Liberation Sans" fontSize="17">{text}</text>
          </g>
        );
      })}
      {AXIS_MARKS.map((x) => (
        <path key={x} d={`M${x - 477 - 8} 764l8 7 8-7`} fill="none" stroke="#1d7d1d" strokeWidth="1.500" />
      ))}
      <g>
        <line x1="49" y1="764" x2="49" y2="790" stroke="#1d7d1d" />
        <path d="M46 772h6v16h-6z" fill="#1010e0" />
        <path d="M49 766l3 8h-6z" fill="#1010e0" />
        <rect x="46" y="790" width="5" height="10" fill="#aaa" />
        <path d="M51 788h16v-3l7 5-7 5v-3H51z" fill="#f00000" />
        <text x="80" y="797" fill="#f00000" fontFamily="Liberation Sans" fontSize="14">X</text>
      </g>
    </CadLayer>
  );
}

function ViewToolbar() {
  return (
    <ViewTools>
      <ViewSlot><svg width="26" height="20" viewBox="0 0 26 20"><ellipse cx="12" cy="12" rx="11" ry="7" fill="#7d8288" /><circle cx="17" cy="7" r="6" fill="#a5abb1" /></svg></ViewSlot>
      <ViewSlot $gap={10}><svg width="26" height="22" viewBox="0 0 26 22"><rect x="1" y="1" width="24" height="20" fill="#4e5b66" stroke="#2a2f33" /><text x="13" y="19" fill="#c9d0d6" fontSize="8" fontFamily="Liberation Sans">2D</text></svg></ViewSlot>
      <ViewSlot $gap={7}><svg width="26" height="22" viewBox="0 0 26 22" fill="none" stroke="#202830"><path d="M1 6h18v15H1zM1 6l5-5h18l-5 5M24 1v15l-5 5M1 13h18" fill="#5a6a76" /></svg></ViewSlot>
      <ViewDrop />
      <ViewSlot $gap={6}><svg width="26" height="22" viewBox="0 0 26 22" fill="#4c5660" stroke="#202830"><path d="M1 6h18v15H1zM1 6l5-5h18l-5 5M24 1v15l-5 5" /></svg></ViewSlot>
      <ViewDrop />
      <ViewSlot $gap={6}><svg width="24" height="24" viewBox="0 0 24 24" fill="none" stroke="#333" strokeWidth="1.500"><path d="M20 12a9 9 0 1 1-3-7M17 1v5h5" /></svg></ViewSlot>
      <ViewDrop />
      <ViewSlot $gap={13}><svg width="26" height="24" viewBox="0 0 26 24" fill="none" stroke="#2a2f33"><rect x="1" y="1" width="24" height="22" /><path d="M14 5h8M14 10h8M14 15h8M14 20h8M4 5h6M4 10h6M4 15h6" stroke="#8c949b" /></svg></ViewSlot>
    </ViewTools>
  );
}

function ReportBody() {
  const rows = [];
  BLOCKS.forEach(([name, values], b) => {
    const base = b * 6;
    const cells = (bold) => values.map((v, i) => <ValueCell key={i} $bold={bold}>{v}</ValueCell>);
    const num = (i) => <NumCell>{base + i + 1}</NumCell>;
    rows.push(
      <tr key={`${name}1`}>
        {num(0)}
        {b === 0 && <BlankCell rowSpan={36} />}
        <MonoCell rowSpan={6} $size={11}>{name}</MonoCell>
        <LabelCell rowSpan={5}>暗柱</LabelCell>
        <LabelCell rowSpan={4}>普通柱</LabelCell>
        <LabelCell rowSpan={3}>商品混凝土</LabelCell>
        <LabelCell rowSpan={2} $size={11.5}>混凝土20石</LabelCell>
        <MonoCell $size={11}>C45</MonoCell>
        {cells(false)}
      </tr>,
      <tr key={`${name}2`}>{num(1)}<LabelCell $bold $size={12.5}>小计</LabelCell>{cells(true)}</tr>,
      <tr key={`${name}3`}>{num(2)}<LabelCell colSpan={2} $bold $size={12.5}>小计</LabelCell>{cells(true)}</tr>,
      <tr key={`${name}4`}>{num(3)}<LabelCell colSpan={3} $bold $size={12.5}>小计</LabelCell>{cells(true)}</tr>,
      <tr key={`${name}5`}>{num(4)}<LabelCell colSpan={4} $bold $size={12.5}>小计</LabelCell>{cells(true)}</tr>,
      <tr key={`${name}6`}>{num(5)}<LabelCell colSpan={5} $bold $size={12.5}>小计</LabelCell>{cells(true)}</tr>
    );
  });
  return <tbody>{rows}</tbody>;
}

function ReportDialog() {
  return (
    <Dialog>
      <DialogTitle>
        报表
        <DialogButtons>
          <svg width="12" height="12" viewBox="0 0 12 12"><rect x="3" y="9" width="7" height="2" fill="#fff" /></svg>
          <svg width="12" height="12" viewBox="0 0 12 12"><rect x="2.500" y="1.500" width="7" height="9" fill="none" stroke="#fff" strokeWidth="1.300" /><rect x="2" y="1" width="8" height="2" fill="#fff" /></svg>
          <span>X</span>
        </DialogButtons>
      </DialogTitle>
      <DialogToolbar>
        <ToolButton $gap={4}><ToolIcon>{TOOL_ICONS.scope}</ToolIcon>设置报表范围</ToolButton>
        <ToolButton $gap={2}><ToolIcon>{TOOL_ICONS.reverse}</ToolIcon>报表反查</ToolButton>
        <ToolButton><ToolIcon>{TOOL_ICONS.export}</ToolIcon>导出<TinyArrow /></ToolButton>
        <ToolButton $pad={2}><ToolIcon>{TOOL_ICONS.print}</ToolIcon>打印预览</ToolButton>
        <SearchBox>搜索报表<svg width="14" height="14" viewBox="0 0 14 14" fill="none" stroke="#6aa5e0"><circle cx="8" cy="6" r="3.500" /><path d="M5.500 8.500L3 11" /></svg></SearchBox>
        <ToolButton>项目特征添加位置<TinyArrow /></ToolButton>
      </DialogToolbar>
      <DialogBody>
        <FirstColumn>
          <TabStrip>
            <ReportTab>钢筋报表量</ReportTab>
            <ReportTab $active>土建报表量</ReportTab>
          </TabStrip>
          <ReportPane>
            <Tree>
              {REPORT_TREE.map((group) => (
                <React.Fragment key={group.title}>
                  <TreeRow $indent={7}><Caret />{group.title}</TreeRow>
                  {group.items.map((item) => (
                    <TreeRow key={item} $indent={37}>
                      <RowLabel $w={183} $pad={4} $active={item === '绘图输入工程量汇总表'}>
                        <DocLines />{item}
                      </RowLabel>
                    </TreeRow>
                  ))}
                </React.Fragment>
              ))}
            </Tree>
          </ReportPane>
        </FirstColumn>
        <SecondColumn>
          <ExpandBar>
            <ToolButton $pad={6}>全部展开(W)</ToolButton>
            <ToolButton $pad={6}>全部折叠(X)</ToolButton>
          </ExpandBar>
          <MidTreePane>
            <Tree $top={2}>
              {MID_TREE.map(([title, items]) => (
                <React.Fragment key={title}>
                  <TreeRow $indent={7}><Caret />{title}</TreeRow>
                  {items.map((item, i) => (
                    <TreeRow key={item + i} $indent={38}>
                      <RowLabel $pad={4} $active={title === '柱'}>{item}</RowLabel>
                    </TreeRow>
                  ))}
                </React.Fragment>
              ))}
            </Tree>
          </MidTreePane>
        </SecondColumn>
        <ThirdColumn>
          <ResultToolbar>
            <Combo $w={80} $h={23}>定额工程量</Combo>
            <ToolButton $gap={3}><ToolIcon>{TOOL_ICONS.category}</ToolIcon>设置分类条件</ToolButton>
            <ToolButton $gap={2}><ToolIcon>{TOOL_ICONS.pick}</ToolIcon>选择工程量</ToolButton>
            <ToolButton $gap={2}><ToolIcon>{TOOL_ICONS.batch}</ToolIcon>设置批量导出</ToolButton>
            <ToolButton $inner={8}>
              <CheckBox><svg width="9" height="9" viewBox="0 0 9 9"><path d="M1 4.500l2.500 3L8 1.500" stroke="#fff" strokeWidth="1.800" fill="none" /></svg></CheckBox>
              显示房间、组合构件量
            </ToolButton>
          </ResultToolbar>
          <SheetWrap>
            <Sheet>
              <ReportTable>
                <colgroup>
                  <col className="num" />
                  {Array.from({ length: 14 }, (_, i) => <col key={i} className="data" />)}
                </colgroup>
                <thead>
                  <tr>
                    <NumCell />
                    <HeadCell rowSpan={2} $h={19} $open>楼层</HeadCell>
                    <HeadCell rowSpan={2}>名称</HeadCell>
                    <HeadCell rowSpan={2}>结构类别</HeadCell>
                    <HeadCell rowSpan={2}>定额类别</HeadCell>
                    <HeadCell rowSpan={2}>材质</HeadCell>
                    <HeadCell rowSpan={2}>混凝土类型</HeadCell>
                    <HeadCell rowSpan={2}>混凝土强度等级</HeadCell>
                    <HeadCell colSpan={7} $h={19}>工程量名称</HeadCell>
                  </tr>
                  <tr>
                    <NumCell />
                    {SUB_HEADS.map((h) => <HeadCell key={h} $sub $h={32}>{h}</HeadCell>)}
                  </tr>
                </thead>
                <ReportBody />
              </ReportTable>
            </Sheet>
            <ScrollTrack><ScrollThumb /></ScrollTrack>
          </SheetWrap>
        </ThirdColumn>
      </DialogBody>
      <DialogFooter><ResizeGrip>⋰</ResizeGrip></DialogFooter>
      <RedRing width="1465" height="825" viewBox="0 0 1465 825" fill="none" stroke="#ee1c1c" strokeWidth="3">
        <ellipse cx="563" cy="73" rx="52" ry="38" />
        <ellipse cx="1198" cy="123" rx="222" ry="36" />
      </RedRing>
    </Dialog>
  );
}

function NetWidgets() {
  return (
    <>
      <NetPill>
        <WifiDot>
          <svg width="30" height="30" viewBox="0 0 30 30" fill="none" stroke="#fff" strokeWidth="3">
            <path d="M3 12c7-7 17-7 24 0M8 17c4-4 10-4 14 0M12 22c2-2 4-2 6 0" />
            <circle cx="15" cy="26" r="1.500" fill="#fff" stroke="none" />
          </svg>
        </WifiDot>
        <NetStats>
          <NetLine>
            <svg width="8" height="14" viewBox="0 0 8 14"><path d="M2 2v12" stroke="#20c776" strokeWidth="2" /><path d="M6 0v12" stroke={ORANGE} strokeWidth="2" /></svg>
            0.00K/s
          </NetLine>
          <NetLine>
            <svg width="8" height="13" viewBox="0 0 8 13"><rect y="3" width="8" height="10" rx="1" fill="#20c776" /><rect x="1" width="2" height="3" fill="#20c776" /></svg>
            1
          </NetLine>
        </NetStats>
      </NetPill>
      <SpeedWidget>
        <SpeedSphere>34%</SpeedSphere>
        <SpeedPill>
          <SpeedRows>
            <SpeedRow>
              <svg width="7" height="11" viewBox="0 0 7 11"><path d="M3.500 0L7 5H4.500v6h-2V5H0z" fill="#e2614f" /></svg>
              0K/s
            </SpeedRow>
            <SpeedRow>
              <svg width="7" height="11" viewBox="0 0 7 11"><path d="M3.500 11L7 6H4.500V0h-2v6H0z" fill="#35a15a" /></svg>
              0K/s
            </SpeedRow>
          </SpeedRows>
          <PlusBadge>+</PlusBadge>
        </SpeedPill>
      </SpeedWidget>
    </>
  );
}

export default function App() {
  return (
    <Page>
      <GlobalStyle />
      <Header>
        <LogoBox>
          <svg width="30" height="29" viewBox="0 0 30 29">
            <defs>
              <linearGradient id="logoFill" x1="0" y1="0" x2="0" y2="1">
                <stop offset="0" stopColor="#35b5f2" />
                <stop offset="1" stopColor="#0a78d8" />
              </linearGradient>
            </defs>
            <rect x="1" y="0" width="28" height="28" rx="6" fill="url(#logoFill)" />
            <path d="M7 6h16v4h-6v14h-4V10H7z" fill="#fff" />
          </svg>
        </LogoBox>
        <HeaderMain>
          <QuickRow>
            <QuickIcons>
              {QuickIconsSet.map((icon, i) => (
                <QuickSlot key={i} $gap={QUICK_GAPS[i]}><QuickSvg>{icon}</QuickSvg></QuickSlot>
              ))}
              <TinyArrow />
            </QuickIcons>
            <TitleText>广联达BIM土建计量平台 GTJ2018 - [G:\南水项目\广联达工程文件\南水镇南通公司危房改造安置房工程地下室.GTJ]</TitleText>
            <WindowButtons>
              <span>-</span>
              <svg width="10" height="12" viewBox="0 0 10 12" fill="none" stroke="#555"><path d="M1 3h6v8H1zM3 3V1h6v8H7" /></svg>
              <span>X</span>
            </WindowButtons>
          </QuickRow>
          <TabRow>
            {TABS.map((t) => <Tab key={t} $active={t === '工程量'}>{t}</Tab>)}
            <UserArea>
              <HelpSearch>
                <span>如何中国建筑学会双拱设计规则：</span>
                <svg width="12" height="12" viewBox="0 0 12 12" fill="none" stroke="#aaa"><circle cx="5" cy="5" r="4" /><path d="M8 8l3 3" /></svg>
              </HelpSearch>
              <svg width="16" height="18" viewBox="0 0 16 18"><rect width="16" height="18" fill="#a9cdf3" /><circle cx="8" cy="7" r="4" fill="#fff" /><path d="M2 18c0-5 12-5 12 0z" fill="#fff" /></svg>
              <UserName>李氏生</UserName>
              <UserIcons>
                <Bell size={14} fill="#6f7680" />
                <MessageCircle size={14} fill="#6f7680" />
                <span>?</span>
                <Shirt size={14} fill="#6f7680" />
                <svg width="13" height="14" viewBox="0 0 13 14"><rect x="0.500" y="0.500" width="12" height="13" fill="#fff" stroke="#6f7680" /><rect x="0" y="0" width="13" height="3" fill="#6f7680" /><path d="M6.500 5l3 3h-2v3h-2V8h-2z" fill="#6f7680" /></svg>
              </UserIcons>
            </UserArea>
          </TabRow>
        </HeaderMain>
      </Header>

      <Ribbon>
        {RIBBON.map((group) => (
          <RibbonGroup key={group.label} $w={group.w}>
            <RibbonButtons>
              {group.items.map(([label, icon]) => (
                <RibbonButton key={label}>
                  <RibbonIcon>{icon}</RibbonIcon>
                  {label}
                </RibbonButton>
              ))}
            </RibbonButtons>
            <GroupLabel>{group.label}</GroupLabel>
          </RibbonGroup>
        ))}
      </Ribbon>

      <ComboBar>
        <Combo $w={100}>基础层</Combo>
        <Combo $w={100}>柱</Combo>
        <Combo $w={100}>柱</Combo>
      </ComboBar>

      <Workspace>
        <TreePanel>
          <TreeHead>
            <svg width="14" height="12" viewBox="0 0 14 12" fill="#3f88d6"><path d="M8 2h3V0h1v2h2v2h-2v2h-1V4H8zM0 7h3V5h2v2h2v2H5v2H3V9H0z" /></svg>
            <ModeButton $first>
              <svg width="15" height="14" viewBox="0 0 15 14" fill="none" stroke="#3f88d6"><path d="M1 2h2M1 7h2M1 12h2M5 2h9M5 7h9M5 12h9" /></svg>
            </ModeButton>
            <ModeButton>
              <svg width="16" height="14" viewBox="0 0 16 14"><rect x="0.500" y="0.500" width="15" height="13" fill="#fff" stroke="#3f88d6" /><rect width="16" height="4" fill="#3f88d6" /><path d="M3 7h10M3 10h6" stroke="#3f88d6" /></svg>
            </ModeButton>
          </TreeHead>
          <Tree $top={2}>
            {LEFT_TREE.map(([label, kind, active]) => {
              const child = kind === 'z' || kind === 'g' || kind === 'q';
              return (
                <TreeRow key={label} $indent={child ? 20 : 5}>
                  {child ? (
                    <RowLabel $active={active} $pad={5}><ColumnIcon kind={kind} />{label}</RowLabel>
                  ) : (
                    <RowLabel $gap={4}><FolderIcon open={kind === 'open'} />{label}</RowLabel>
                  )}
                </TreeRow>
              );
            })}
          </Tree>
        </TreePanel>

        <MidColumn>
          <GreyStrip />
          <PaneTitle>构件列表</PaneTitle>
          <NewRow>
            <svg width="14" height="15" viewBox="0 0 14 15"><path d="M2 2h8l3 3v9H2z" fill="#fff" stroke="#8a97a8" /><rect width="4" height="4" fill={ORANGE} /></svg>
            新建
          </NewRow>
          <SearchRow>搜索构件...</SearchRow>
          <ListArea>
            <Tree $top={2}>
              <TreeRow $indent={11}><Caret />柱</TreeRow>
              <TreeRow $indent={31}><Caret $gap={6} />框架柱</TreeRow>
            </Tree>
          </ListArea>
          <GreyStrip />
          <PaneTitle>属性列表</PaneTitle>
          <PropHead>属性名称</PropHead>
          <PropList>
            {PROPS.map((name, i) => (
              <PropRow key={name}>
                <PropNum>{i + 1}</PropNum>
                <PropName $plain={BLACK_PROPS.includes(i)}>{name}</PropName>
                <PropValue />
              </PropRow>
            ))}
          </PropList>
          <ScrollDown />
          <HScroll><HArrow /><HThumb /><HArrow $right /></HScroll>
          <PaneFoot><FootButton>截面编辑</FootButton></PaneFoot>
        </MidColumn>

        <Canvas>
          <CadDrawing />
          <ViewToolbar />
          <ImeBar>
            <svg width="26" height="20" viewBox="0 0 26 20"><path d="M5 3h19l-2 5H13l-1 1h7c3 0 3 2 2 4-1 3-3 5-6 5H2l2-5h9l1-1H7C4 12 3 10 4 8z" fill="#3cb528" /></svg>
            <ImeChar>五</ImeChar>
            <Moon size={14} fill="#50596b" />
            <span>°,</span>
            <Keyboard size={15} />
            <User size={14} fill="#50596b" />
            <Wrench size={14} fill="#50596b" />
          </ImeBar>
        </Canvas>
      </Workspace>

      <StatusBar>
        <StatusText $left={2} $spread={1} $track={0.6}>X = 5414 Y = -7812 Z = -4600</StatusText>
        <StatusText $left={28}>层高： 4.3</StatusText>
        <StatusText $left={27}>标高: -4.6~-0.3</StatusText>
        <StatusText $left={46}>0</StatusText>
        <StatusText $left={95}>隐藏： 0</StatusText>
        <StatusText $left={35} />
        <StatusButton $w={25}><svg width="14" height="14" viewBox="0 0 14 14" fill="none" stroke="#333"><path d="M3 1v11h10M3 8h3v4" /></svg></StatusButton>
        <StatusButton $w={36} $on><svg width="22" height="18" viewBox="0 0 22 18"><rect x="3" y="3" width="8" height="14" fill="none" stroke="#333" /><rect x="1" y="0" width="4" height="5" fill={ORANGE} /><path d="M16 9l3 0-1.500 2z" fill="#555" /></svg></StatusButton>
        <StatusButton $w={25}><svg width="14" height="16" viewBox="0 0 14 16" fill="none" stroke="#777"><path d="M2 1l10 14M12 1L2 15" /></svg></StatusButton>
        <StatusButton $w={36}><svg width="24" height="16" viewBox="0 0 24 16" fill="none" stroke="#333"><path d="M10 2L3 14h12" /><path d="M19 8h4l-2 2z" fill="#555" /></svg></StatusButton>
        <StatusButton $w={36}><svg width="24" height="16" viewBox="0 0 24 16"><path d="M4 2v8M1 6h6" stroke="#333" /><rect x="8" y="9" width="6" height="5" fill="#333" /><path d="M19 8h4l-2 2z" fill="#555" /></svg></StatusButton>
        <StatusButton $w={73}>跨图层选择</StatusButton>
        <StatusButton $w={61}>折线选择</StatusButton>
        <StatusText>按鼠标左键指定第一个角点，或拾取构件图元</StatusText>
        <FpsText>250 FPS</FpsText>
      </StatusBar>
      <BottomStrip />

      <NetWidgets />
      <ReportDialog />
    </Page>
  );
}
